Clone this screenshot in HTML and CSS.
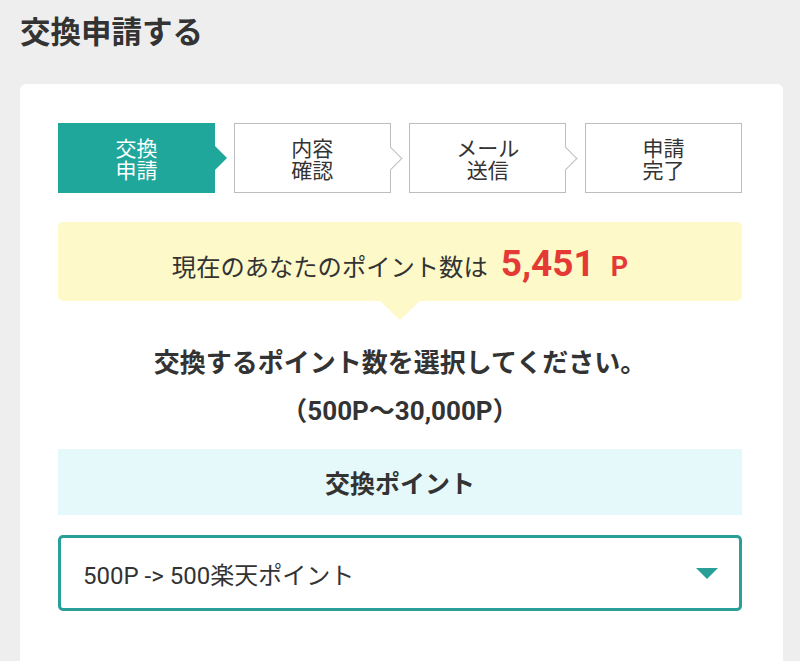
FILE: index.html
```html
<!DOCTYPE html>
<html lang="ja">
<head>
<meta charset="utf-8">
<title>交換申請する</title>
<link rel="stylesheet" href="styles.css">
</head>
<body>
<h1 class="page-title">交換申請する</h1>
<main class="card">
  <ol class="steps">
    <li class="step step-active"><span class="step-line">交換</span><span class="step-line">申請</span></li>
    <li class="step step-arrow"><span class="step-line">内容</span><span class="step-line">確認</span></li>
    <li class="step step-arrow"><span class="step-line">メール</span><span class="step-line">送信</span></li>
    <li class="step"><span class="step-line">申請</span><span class="step-line">完了</span></li>
  </ol>
  <div class="balance">
    <span class="balance-label">現在のあなたのポイント数は</span>
    <span class="balance-num">5,451</span>
    <span class="balance-unit">P</span>
  </div>
  <p class="instruction">交換するポイント数を選択してください。<br>（500P〜30,000P）</p>
  <div class="band">交換ポイント</div>
  <div class="select">
    <span class="select-text">500P -&gt; 500楽天ポイント</span>
    <span class="select-caret"></span>
  </div>
</main>
</body>
</html>
```
FILE: styles.css
```css
* { box-sizing: border-box; }
html, body { margin: 0; padding: 0; }
body {
  background: #eeeeee;
  font-family: Roboto, "Noto Sans CJK JP", sans-serif;
  color: #333333;
  height: 661px;
  overflow: hidden;
}
.page-title {
  margin: 0;
  padding: 12px 0 0 20px;
  font-size: 30.5px;
  line-height: 36px;
  font-weight: 700;
  color: #333333;
  font-family: "Noto Sans CJK JP", sans-serif;
}
.card {
  margin: 36px 0 0 20px;
  width: 763px;
  background: #ffffff;
  border-radius: 6px;
  padding: 39px 41px 60px 38px;
  min-height: 700px;
}
.steps {
  list-style: none;
  margin: 0;
  padding: 0;
  display: flex;
  justify-content: space-between;
}
.step {
  position: relative;
  width: 157px;
  height: 70px;
  border: 1px solid #bdbdbd;
  background: #ffffff;
  display: flex;
  flex-direction: column;
  align-items: center;
  justify-content: center;
  text-align: center;
  font-family: "Noto Sans CJK JP", sans-serif;
  font-size: 21px;
  font-weight: 400;
  color: #333333;
}
.step-line {
  display: block;
  height: 22px;
  line-height: 22px;
}
.step-active {
  background: #1fa79b;
  border-color: #1fa79b;
  color: #ffffff;
}
.step-active::after {
  content: "";
  position: absolute;
  right: -13px;
  top: 50%;
  margin-top: -12px;
  border-left: 12px solid #1fa79b;
  border-top: 12px solid transparent;
  border-bottom: 12px solid transparent;
}
.step-arrow::after {
  content: "";
  position: absolute;
  right: -9px;
  top: 50%;
  width: 16px;
  height: 16px;
  margin-top: -8px;
  background: #ffffff;
  border-top: 1px solid #bdbdbd;
  border-right: 1px solid #bdbdbd;
  transform: rotate(45deg);
}
.balance {
  position: relative;
  margin-top: 29px;
  height: 79px;
  background: #fdf9c9;
  border-radius: 5px;
  display: flex;
  align-items: baseline;
  justify-content: center;
  padding-top: 20px;
}
.balance::after {
  content: "";
  position: absolute;
  left: 50%;
  bottom: -19px;
  margin-left: -20px;
  border-top: 19px solid #fdf9c9;
  border-left: 20px solid transparent;
  border-right: 20px solid transparent;
}
.balance-label {
  font-family: "Noto Sans CJK JP", sans-serif;
  font-size: 24.3px;
  line-height: 40px;
  color: #333333;
}
.balance-num {
  margin-left: 13px;
  font-family: Roboto, sans-serif;
  font-weight: 700;
  font-size: 37px;
  color: #e53935;
}
.balance-unit {
  margin-left: 16px;
  font-family: Roboto, sans-serif;
  font-weight: 700;
  font-size: 27px;
  color: #e53935;
}
.instruction {
  margin: 38px 0 0;
  text-align: center;
  font-size: 26px;
  line-height: 48px;
  font-weight: 700;
  color: #333333;
}
.band {
  margin-top: 14px;
  height: 66px;
  background: #e6f9fa;
  display: flex;
  align-items: center;
  justify-content: center;
  font-family: "Noto Sans CJK JP", sans-serif;
  font-size: 25px;
  font-weight: 700;
  color: #333333;
}
.select {
  margin-top: 20px;
  height: 76px;
  border: 3px solid #2a9f97;
  border-radius: 5px;
  display: flex;
  align-items: center;
  justify-content: space-between;
  padding: 0 21px 0 22px;
}
.select-text {
  font-size: 24px;
  color: #333333;
  font-family: Roboto, "Noto Sans CJK JP", sans-serif;
}
.select-caret {
  width: 0;
  height: 0;
  border-top: 11px solid #2a9f97;
  border-left: 11px solid transparent;
  border-right: 11px solid transparent;
}
```
